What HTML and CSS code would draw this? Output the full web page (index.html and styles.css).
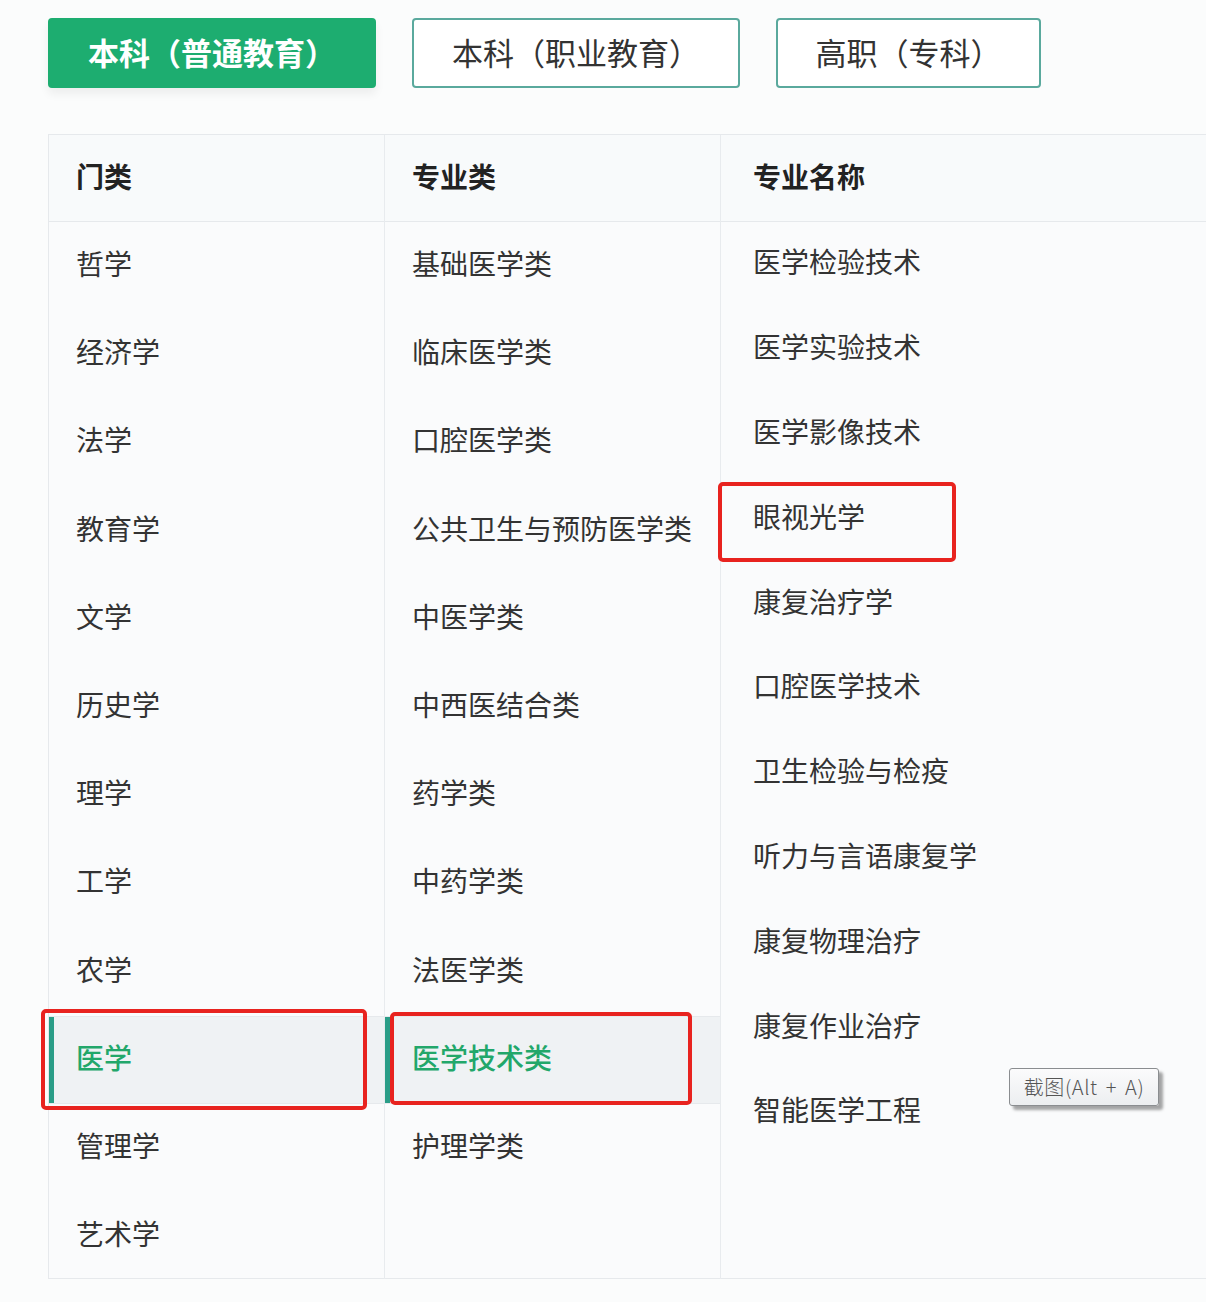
FILE: index.html
```html
<!DOCTYPE html>
<html lang="zh">
<head>
<meta charset="utf-8">
<link rel="stylesheet" href="styles.css">
</head>
<body>
<div class="page">
  <div class="tabs">
    <div class="tab tab-active">本科（普通教育）</div>
    <div class="tab tab-1">本科（职业教育）</div>
    <div class="tab tab-2">高职（专科）</div>
  </div>
  <div class="table">
    <div class="col col-1">
      <div class="head">门类</div>
      <div class="body">
        <div class="row">哲学</div>
        <div class="row">经济学</div>
        <div class="row">法学</div>
        <div class="row">教育学</div>
        <div class="row">文学</div>
        <div class="row">历史学</div>
        <div class="row">理学</div>
        <div class="row">工学</div>
        <div class="row">农学</div>
        <div class="row selected">医学<span class="mark mark-1"></span></div>
        <div class="row">管理学</div>
        <div class="row">艺术学</div>
      </div>
    </div>
    <div class="col col-2">
      <div class="head">专业类</div>
      <div class="body">
        <div class="row">基础医学类</div>
        <div class="row">临床医学类</div>
        <div class="row">口腔医学类</div>
        <div class="row">公共卫生与预防医学类</div>
        <div class="row">中医学类</div>
        <div class="row">中西医结合类</div>
        <div class="row">药学类</div>
        <div class="row">中药学类</div>
        <div class="row">法医学类</div>
        <div class="row selected">医学技术类<span class="mark mark-2"></span></div>
        <div class="row">护理学类</div>
      </div>
    </div>
    <div class="col col-3">
      <div class="head">专业名称</div>
      <div class="body">
        <div class="row">医学检验技术</div>
        <div class="row">医学实验技术</div>
        <div class="row">医学影像技术</div>
        <div class="row">眼视光学<span class="mark mark-3"></span></div>
        <div class="row">康复治疗学</div>
        <div class="row">口腔医学技术</div>
        <div class="row">卫生检验与检疫</div>
        <div class="row">听力与言语康复学</div>
        <div class="row">康复物理治疗</div>
        <div class="row">康复作业治疗</div>
        <div class="row">智能医学工程</div>
        <div class="tooltip">截图(Alt + A)</div>
      </div>
    </div>
  </div>
</div>
</body>
</html>
```

FILE: styles.css
```css
html, body {
  margin: 0;
  padding: 0;
  background: #fbfcfc;
}
body {
  font-family: "Noto Sans CJK SC", "Noto Sans", sans-serif;
  color: #333;
}
.page {
  padding: 18px 0 0 48px;
  overflow: hidden;
}
.tabs {
  display: flex;
  gap: 36px;
  height: 70px;
}
.tab {
  box-sizing: border-box;
  height: 70px;
  width: 328px;
  display: flex;
  align-items: center;
  justify-content: center;
  padding-bottom: 3px;
  font-size: 31px;
  border-radius: 4px;
  border: 2px solid #5aa99d;
  background: #ffffff;
  color: #333;
}
.tab-2 {
  width: 265px;
}
.tab-active {
  background: #1dad70;
  border-color: #1dad70;
  color: #ffffff;
  font-weight: 700;
  box-shadow: 0 6px 10px rgba(0, 0, 0, 0.06);
}
.table {
  margin-top: 46px;
  display: grid;
  grid-template-columns: 336px 336px 1fr;
  border: 1px solid #e6e9ec;
  border-right: none;
  background: #fafbfc;
  height: 1145px;
  box-sizing: border-box;
}
.col {
  border-right: 1px solid #e8ebee;
  position: relative;
}
.col-3 {
  border-right: none;
}
.head {
  box-sizing: border-box;
  height: 87px;
  border-bottom: 1px solid #e6e9ec;
  display: flex;
  align-items: center;
  padding-left: 27px;
  padding-bottom: 4px;
  font-size: 28px;
  font-weight: 700;
  color: #222;
  background: #f8fafb;
}
.col-3 .head {
  padding-left: 32px;
}
.body {
  position: relative;
}
.row {
  position: relative;
  box-sizing: border-box;
  height: 88.2px;
  display: flex;
  align-items: center;
  padding-left: 27px;
  padding-bottom: 6px;
  font-size: 28px;
  color: #333;
}
.col-3 .row {
  height: 84.8px;
  padding-left: 32px;
}
.row.selected {
  background: #eff2f4;
  color: #22a76a;
  font-weight: 500;
  border-top: 1px solid #e6e9ec;
  border-bottom: 1px solid #e6e9ec;
}
.row.selected::before {
  content: "";
  position: absolute;
  left: 0;
  top: 0;
  bottom: 0;
  width: 5px;
  background: #2a9d87;
}
.mark {
  position: absolute;
  border: 4px solid #e8231f;
  border-radius: 5px;
  box-sizing: border-box;
}
.mark-1 {
  top: -8px;
  left: -8px;
  width: 326px;
  height: 101px;
}
.mark-2 {
  top: -5px;
  left: 5px;
  width: 302px;
  height: 93px;
}
.mark-3 {
  top: 6px;
  left: -3px;
  width: 238px;
  height: 80px;
}
.tooltip {
  position: absolute;
  left: 288px;
  top: 846px;
  width: 150px;
  height: 38px;
  box-sizing: border-box;
  border: 1px solid #8a8d90;
  border-radius: 3px;
  background: linear-gradient(#fbfbfc, #eceef0);
  box-shadow: 4px 4px 3px rgba(0, 0, 0, 0.35);
  font-size: 20px;
  letter-spacing: 0.6px;
  word-spacing: 3px;
  color: #555;
  display: flex;
  align-items: center;
  justify-content: center;
  padding-bottom: 2px;
  font-family: "Noto Sans CJK SC", "DejaVu Sans", sans-serif;
  font-weight: 300;
  white-space: pre;
}
```
